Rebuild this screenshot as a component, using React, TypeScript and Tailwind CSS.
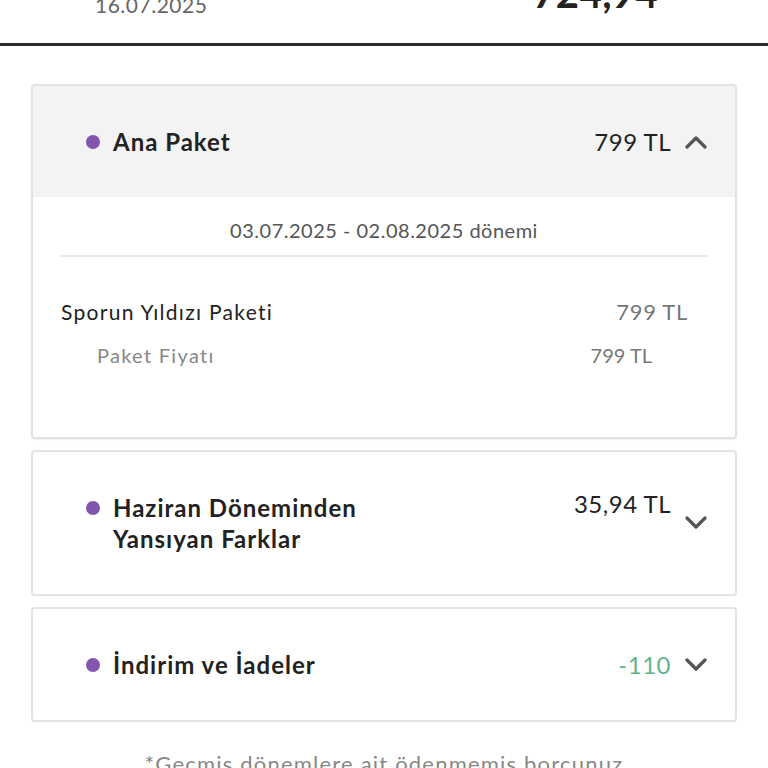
import React from "react";

const font = { fontFamily: "Lato, 'Noto Sans', sans-serif" };

function Chevron({ up }: { up?: boolean }) {
  return (
    <svg width="24" height="14" viewBox="0 0 24 14" className="shrink-0">
      <polyline
        points={up ? "3,12 12,3 21,12" : "3,2 12,11 21,2"}
        fill="none"
        stroke="#555"
        strokeWidth="3.2"
        strokeLinecap="round"
        strokeLinejoin="round"
      />
    </svg>
  );
}

function Dot() {
  return <span className="block w-[14px] h-[14px] rounded-full bg-[#8455ac] shrink-0" />;
}

export default function App() {
  return (
    <div className="w-[768px] h-[768px] overflow-hidden bg-white" style={font}>
      {/* header (scrolled partly out of view) */}
      <div className="h-[43px] flex items-end justify-between">
        <div className="pl-[95px] pb-[26px] text-[21px] leading-[24px] text-[#666] tracking-[0.5px]">16.07.2025</div>
        <div className="pr-[110px] pb-[30px] text-[40px] leading-[40px] font-bold text-[#222]">724,94</div>
      </div>
      <div className="h-[3px] bg-[#2b2b2b]" />

      <div className="px-[31px] pt-[38px] flex flex-col gap-[11px]">
        {/* Card 1 */}
        <div className="border-2 border-[#e3e3e3] rounded-[4px] overflow-hidden shadow-[0_1px_2px_rgba(0,0,0,0.06)]">
          <div className="bg-[#f3f3f3] h-[111px] flex items-center justify-between pl-[53px] pr-[27px]">
            <div className="flex items-center gap-[13px]">
              <Dot />
              <span className="text-[24px] font-bold tracking-[1px] text-[#222]">Ana Paket</span>
            </div>
            <div className="flex items-center gap-[13px]">
              <span className="text-[24px] tracking-[0.5px] text-[#222]">799 TL</span>
              <Chevron up />
            </div>
          </div>
          <div className="px-[28px] pt-[21px] pb-[70px]">
            <div className="text-center text-[20px] leading-[24px] tracking-[0.5px] text-[#555]">03.07.2025 - 02.08.2025 dönemi</div>
            <div className="h-[2px] bg-[#e6e6e6] mt-[13px]" />
            <div className="flex justify-between items-center mt-[43px] pr-[19px] leading-[24px]">
              <span className="text-[21px] tracking-[1.3px] text-[#222]">Sporun Yıldızı Paketi</span>
              <span className="text-[22px] tracking-[0.7px] text-[#777]">799 TL</span>
            </div>
            <div className="flex justify-between items-center mt-[19px] pl-[36px] pr-[55px] leading-[24px]">
              <span className="text-[20px] tracking-[1.3px] text-[#888]">Paket Fiyatı</span>
              <span className="text-[20px] text-[#777]">799 TL</span>
            </div>
          </div>
        </div>

        {/* Card 2 */}
        <div className="border-2 border-[#e3e3e3] rounded-[4px] h-[146px] flex items-center justify-between pl-[53px] pr-[27px]">
          <div className="flex items-start gap-[13px]">
            <span className="mt-[9px]"><Dot /></span>
            <span className="text-[24px] leading-[31px] font-bold tracking-[1px] text-[#222]">
              Haziran Döneminden
              <br />
              Yansıyan Farklar
            </span>
          </div>
          <div className="flex items-center gap-[13px] self-stretch py-[38px]">
            <span className="self-start text-[24px] leading-[28px] tracking-[0.5px] text-[#222]">35,94 TL</span>
            <Chevron />
          </div>
        </div>

        {/* Card 3 */}
        <div className="border-2 border-[#e3e3e3] rounded-[4px] h-[115px] flex items-center justify-between pl-[53px] pr-[27px]">
          <div className="flex items-center gap-[13px]">
            <Dot />
            <span className="text-[24px] font-bold tracking-[1px] text-[#222]">İndirim ve İadeler</span>
          </div>
          <div className="flex items-center gap-[13px]">
            <span className="text-[24px] tracking-[0.5px] text-[#5fb58a]">-110</span>
            <Chevron />
          </div>
        </div>

        <div className="text-center text-[22px] leading-[30px] text-[#888] mt-[16px] tracking-[1.2px] whitespace-nowrap">*Geçmiş dönemlere ait ödenmemiş borcunuz</div>
      </div>
    </div>
  );
}
